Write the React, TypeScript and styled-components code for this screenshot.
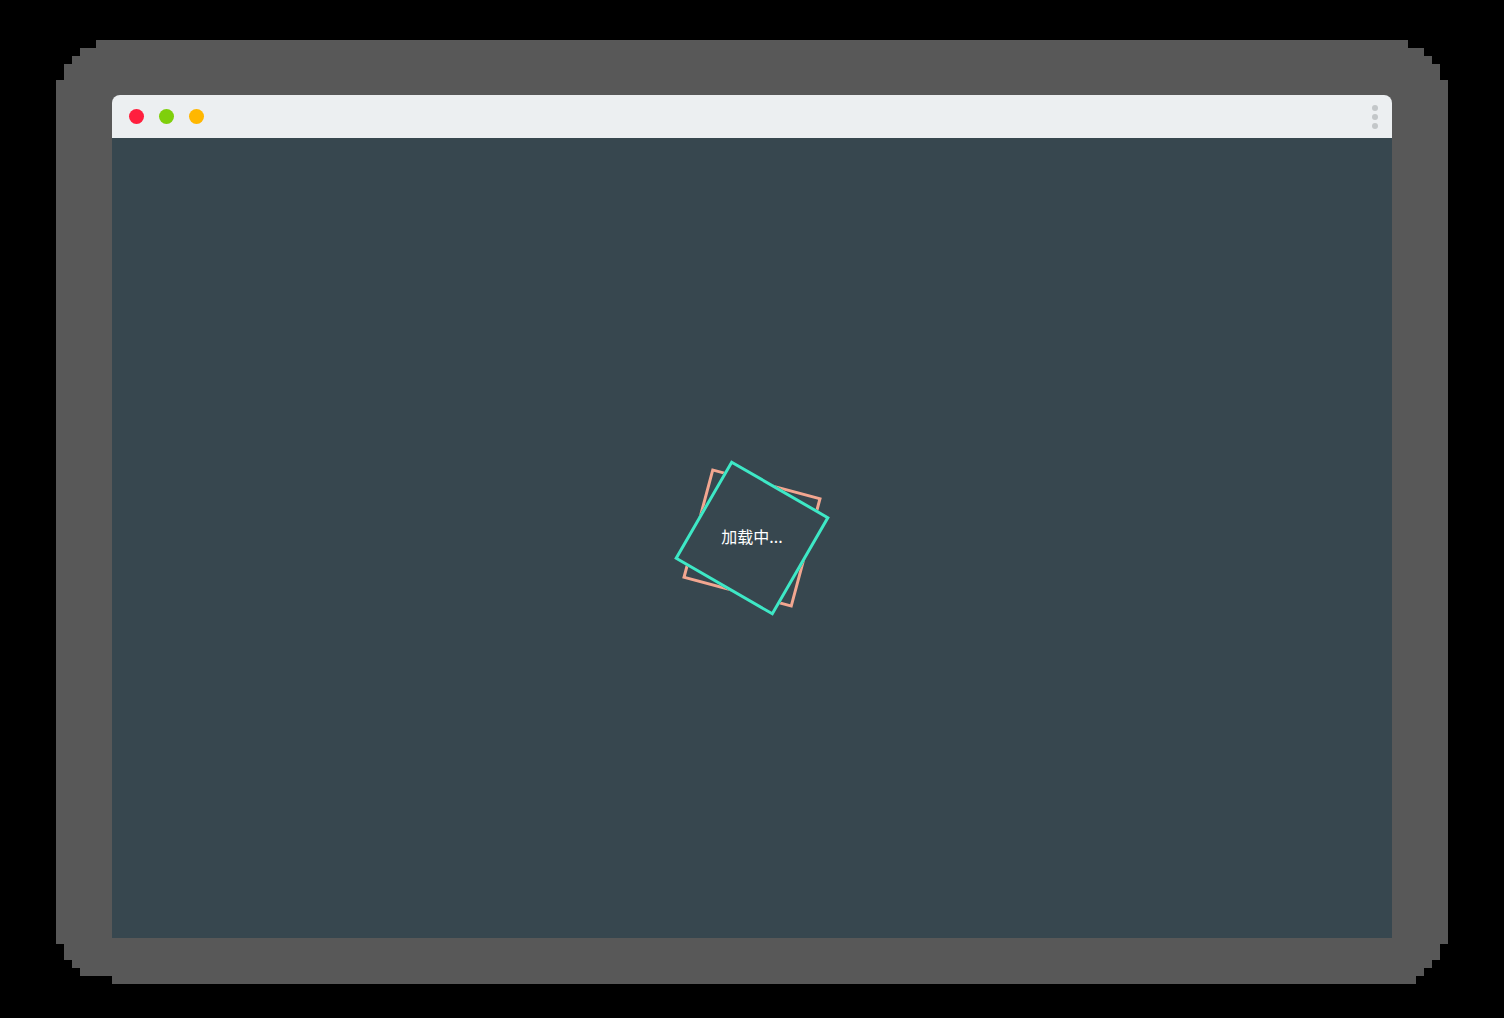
import React from "react";
import styled, { createGlobalStyle } from "styled-components";

const GlobalStyle = createGlobalStyle`
  html, body {
    margin: 0;
    padding: 0;
    background: #000000;
  }
  body {
    width: 1504px;
    height: 1018px;
    overflow: hidden;
    font-family: "Noto Sans CJK SC", "Noto Sans", sans-serif;
  }
`;

const Stage = styled.div`
  padding: 40px 56px 34px 56px;
`;

const ShadowFrame = styled.div`
  width: 1392px;
  height: 944px;
  box-sizing: border-box;
  padding: 55px 56px 46px 56px;
  background: #585858;
  clip-path: polygon(
    40px 0, 1352px 0, 1352px 8px, 1368px 8px, 1368px 16px, 1376px 16px,
    1376px 24px, 1384px 24px, 1384px 40px, 1392px 40px,
    1392px 904px, 1384px 904px, 1384px 920px, 1376px 920px, 1376px 928px,
    1368px 928px, 1368px 936px, 1360px 936px, 1360px 944px,
    56px 944px, 56px 936px, 24px 936px, 24px 928px, 16px 928px, 16px 920px,
    8px 920px, 8px 904px, 0 904px,
    0 40px, 8px 40px, 8px 24px, 16px 24px, 16px 16px, 24px 16px, 24px 8px,
    40px 8px
  );
`;

const Window = styled.div`
  width: 1280px;
  display: flex;
  flex-direction: column;
  border-radius: 8px 8px 0 0;
  overflow: hidden;
`;

const TitleBar = styled.div`
  height: 43px;
  background: #eceff1;
  display: flex;
  align-items: center;
  padding: 0 14px 0 17px;
`;

const Lights = styled.div`
  display: flex;
  gap: 15px;
`;

const Light = styled.span<{ $color: string }>`
  width: 15px;
  height: 15px;
  border-radius: 50%;
  background: ${(p) => p.$color};
`;

const MenuDots = styled.div`
  margin-left: auto;
  display: flex;
  flex-direction: column;
  gap: 3px;
  padding-top: 1px;
`;

const MenuDot = styled.span`
  width: 6px;
  height: 6px;
  border-radius: 50%;
  background: #c3c7c9;
`;

const Content = styled.div`
  height: 800px;
  background: #37474f;
  display: grid;
  place-items: center;
`;

const Loader = styled.div`
  display: grid;
  place-items: center;
  width: 114px;
  height: 114px;
`;

const Square = styled.div<{ $color: string; $angle: number }>`
  grid-area: 1 / 1;
  width: 114px;
  height: 114px;
  box-sizing: border-box;
  border: 3px solid ${(p) => p.$color};
  background: #37474f;
  transform: rotate(${(p) => p.$angle}deg);
`;

const LoadingText = styled.span`
  grid-area: 1 / 1;
  position: relative;
  color: #ffffff;
  font-family: "Noto Sans CJK SC", "Noto Sans", sans-serif;
  font-size: 16px;
  line-height: 1;
  white-space: nowrap;
  margin-bottom: 5px;
`;

export default function App() {
  return (
    <>
      <GlobalStyle />
      <Stage>
        <ShadowFrame>
          <Window>
            <TitleBar>
              <Lights>
                <Light $color="#ff1f3e" />
                <Light $color="#7fcf0b" />
                <Light $color="#ffb700" />
              </Lights>
              <MenuDots>
                <MenuDot />
                <MenuDot />
                <MenuDot />
              </MenuDots>
            </TitleBar>
            <Content>
              <Loader>
                <Square $color="#f2a690" $angle={15} />
                <Square $color="#3ee8c6" $angle={30} />
                <LoadingText>加载中...</LoadingText>
              </Loader>
            </Content>
          </Window>
        </ShadowFrame>
      </Stage>
    </>
  );
}
